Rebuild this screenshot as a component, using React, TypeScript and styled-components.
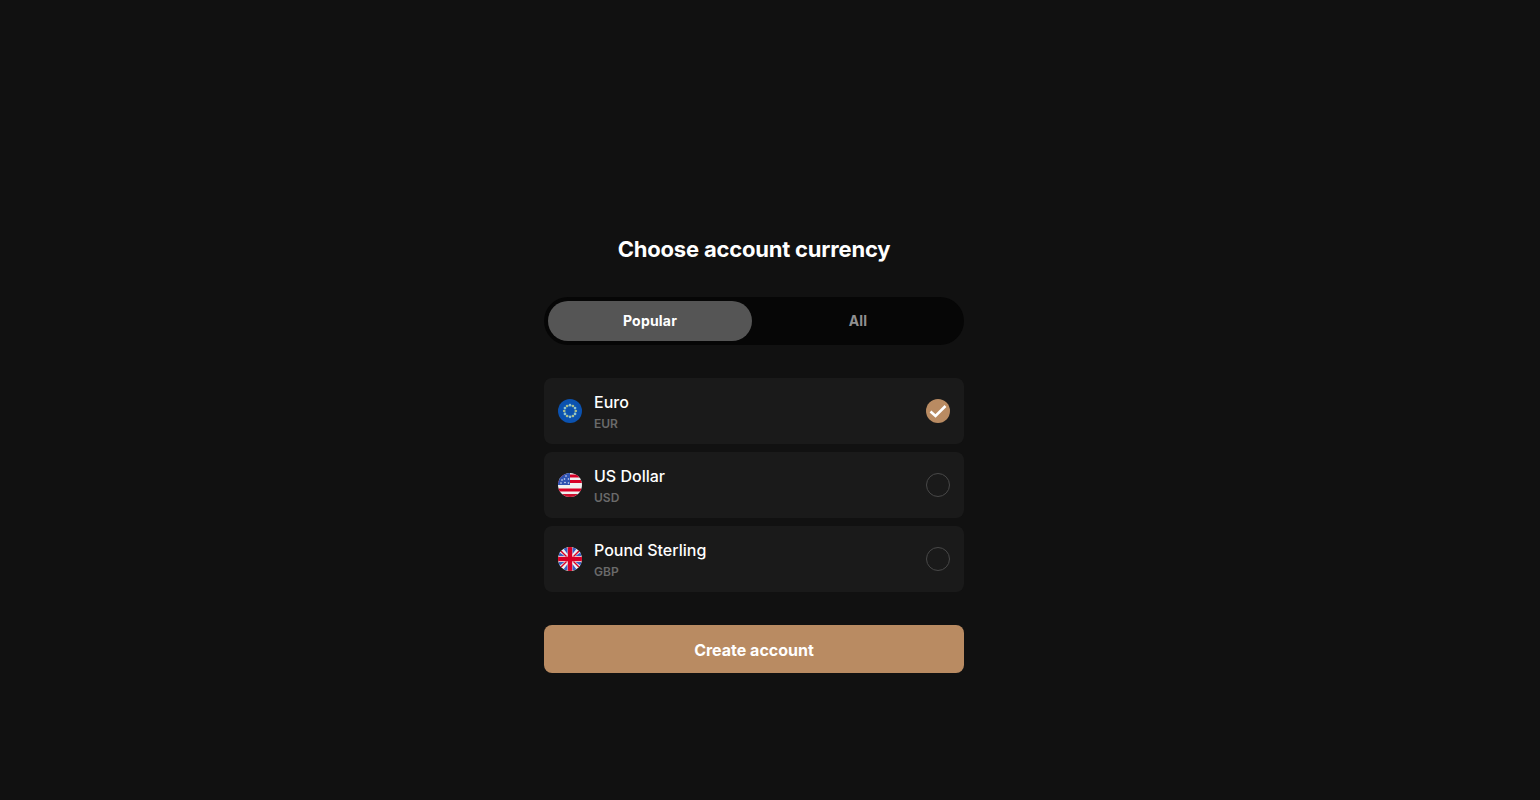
import { useState } from "react";
import styled, { createGlobalStyle } from "styled-components";

const GlobalStyle = createGlobalStyle`
  html, body {
    margin: 0;
    height: 100%;
    background: #111111;
    font-family: Inter, "Liberation Sans", sans-serif;
  }
`;

const Page = styled.main`
  box-sizing: border-box;
  height: 800px;
  overflow: hidden;
  padding: 236px 32px 0 0;
  display: flex;
  justify-content: center;
`;

const Panel = styled.section`
  width: 420px;
  display: flex;
  flex-direction: column;
`;

const Title = styled.h1`
  margin: 0 0 34px;
  height: 27px;
  font-size: 22px;
  line-height: 27px;
  font-weight: 700;
  letter-spacing: -0.2px;
  color: #ffffff;
  text-align: center;
`;

const Tabs = styled.div`
  box-sizing: border-box;
  height: 48px;
  padding: 4px 0 4px 4px;
  border-radius: 24px;
  background: #060606;
  display: grid;
  grid-template-columns: 204px 1fr;
  margin-bottom: 33px;
`;

const Tab = styled.button<{ $active?: boolean }>`
  border: 0;
  padding: 0;
  border-radius: 20px;
  font: 700 14px/20px Inter, "Liberation Sans", sans-serif;
  letter-spacing: 0.2px;
  background: ${(p) => (p.$active ? "#555555" : "transparent")};
  color: ${(p) => (p.$active ? "#ffffff" : "#909090")};
`;

const List = styled.div`
  display: flex;
  flex-direction: column;
  gap: 8px;
  margin-bottom: 33px;
`;

const Row = styled.div`
  box-sizing: border-box;
  height: 66px;
  padding: 0 14px;
  border-radius: 8px;
  background: #1a1a1a;
  display: flex;
  align-items: center;
  gap: 12px;
`;

const Flag = styled.svg`
  width: 24px;
  height: 24px;
  flex: none;
  display: block;
`;

const Names = styled.div`
  flex: 1;
  display: flex;
  flex-direction: column;
  gap: 2px;
  padding-bottom: 1px;
`;

const Name = styled.div`
  font-size: 16px;
  line-height: 24px;
  font-weight: 500;
  color: #ffffff;
`;

const Code = styled.div`
  font-size: 12px;
  line-height: 15px;
  font-weight: 600;
  color: #6a6a6a;
`;

const Radio = styled.span<{ $checked?: boolean }>`
  box-sizing: border-box;
  width: 24px;
  height: 24px;
  flex: none;
  border-radius: 50%;
  border: ${(p) => (p.$checked ? "0" : "1px solid #484848")};
  background: ${(p) => (p.$checked ? "#b98b62" : "transparent")};
  display: flex;
  align-items: center;
  justify-content: center;
`;

const Submit = styled.button`
  height: 48px;
  border: 0;
  padding: 2px 0 0;
  border-radius: 8px;
  background: #b98b62;
  color: #ffffff;
  font: 700 16px/20px Inter, "Liberation Sans", sans-serif;
`;

function EuFlag() {
  const stars = Array.from({ length: 12 }, (_, i) => {
    const a = (i * Math.PI) / 6;
    return { x: 12 + 5.8 * Math.sin(a), y: 12 - 5.8 * Math.cos(a) };
  });
  return (
    <Flag viewBox="0 0 24 24">
      <circle cx="12" cy="12" r="12" fill="#0b52b0" />
      {stars.map((s, i) => (
        <circle key={i} cx={s.x} cy={s.y} r="1.35" fill={i % 2 ? "#a8bd8c" : "#8ec4cf"} />
      ))}
    </Flag>
  );
}

function UsFlag() {
  return (
    <Flag viewBox="0 0 24 24">
      <defs>
        <clipPath id="us-clip">
          <circle cx="12" cy="12" r="12" />
        </clipPath>
      </defs>
      <g clipPath="url(#us-clip)">
        <rect width="24" height="24" fill="#f0f0f0" />
        <rect y="1.5" width="24" height="3" fill="#d80027" />
        <rect y="7" width="24" height="3" fill="#d80027" />
        <rect y="15.5" width="24" height="3" fill="#d80027" />
        <rect y="21" width="24" height="3" fill="#c8102e" />
        <rect width="12" height="12" fill="#2e52b2" />
        {[
          [4, 7], [8, 3], [10.5, 6], [6.5, 6], [3, 10], [7, 9.5], [10.5, 10],
        ].map(([x, y]) => (
          <circle key={`${x}-${y}`} cx={x} cy={y} r="0.8" fill="#dfe6f5" />
        ))}
      </g>
    </Flag>
  );
}

function UkFlag() {
  return (
    <Flag viewBox="0 0 24 24">
      <defs>
        <clipPath id="uk-clip">
          <circle cx="12" cy="12" r="12" />
        </clipPath>
      </defs>
      <g clipPath="url(#uk-clip)">
        <rect width="24" height="24" fill="#f0f0f0" />
        <path d="M1 5 6.5 9H1ZM5 1l4.5 6V1ZM14.5 1v6L19 1ZM23 5l-5.5 4H23ZM1 19l5.5-4H1ZM5 23l4.5-6v6ZM14.5 23v-6L19 23ZM23 19l-5.5-4H23Z" fill="#3a62c4" />
        <path d="M2 2 9.5 9.5H7.5L2 4ZM22 2l-7.5 7.5h2L22 4ZM2 22l7.5-7.5h-2L2 20ZM22 22l-7.5-7.5h2L22 20Z" fill="#d80027" />
        <rect x="9.8" width="4.4" height="24" fill="#d80027" />
        <rect y="9.8" width="24" height="4.4" fill="#d80027" />
      </g>
    </Flag>
  );
}

const currencies = [
  { code: "EUR", name: "Euro", flag: <EuFlag /> },
  { code: "USD", name: "US Dollar", flag: <UsFlag /> },
  { code: "GBP", name: "Pound Sterling", flag: <UkFlag /> },
];

export default function App() {
  const [selected] = useState("EUR");

  return (
    <Page>
      <GlobalStyle />
      <Panel>
        <Title>Choose account currency</Title>
        <Tabs>
          <Tab $active>Popular</Tab>
          <Tab>All</Tab>
        </Tabs>
        <List>
          {currencies.map((c) => (
            <Row key={c.code}>
              {c.flag}
              <Names>
                <Name>{c.name}</Name>
                <Code>{c.code}</Code>
              </Names>
              <Radio $checked={c.code === selected}>
                {c.code === selected && (
                  <svg width="18" height="18" viewBox="0 0 18 18" fill="none">
                    <path d="M1.5 9.5 6.5 14 16.5 4" stroke="#fff" strokeWidth="2.6" />
                  </svg>
                )}
              </Radio>
            </Row>
          ))}
        </List>
        <Submit>Create account</Submit>
      </Panel>
    </Page>
  );
}
